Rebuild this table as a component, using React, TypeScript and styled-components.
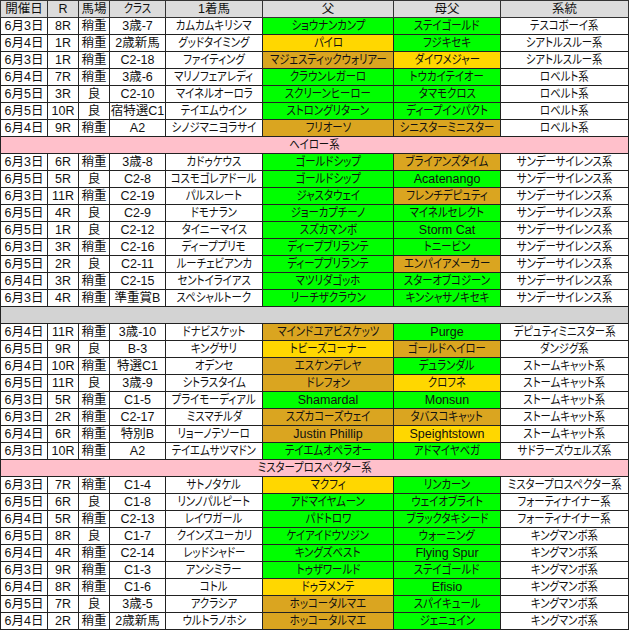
import { Fragment } from "react";
import styled, { createGlobalStyle, css } from "styled-components";

const GlobalStyle = createGlobalStyle`
  body {
    margin: 0;
    background: #fff;
    font-family: "Liberation Sans", "Noto Sans CJK JP", sans-serif;
  }
`;

type Tone = "G" | "Y" | "O" | "W";

const toneColor: Record<Tone, string> = {
  G: "#00ff00",
  Y: "#ffd700",
  O: "#daa520",
  W: "#ffffff",
};

type Entry = [string, string, string, string, string, string, Tone, string, Tone, string];

type Block = { title?: string; grey?: boolean; rows: Entry[] };

const blocks: Block[] = [
  {
    rows: [
      ["6月3日", "8R", "稍重", "3歳-7", "カムカムキリシマ", "ショウナンカンプ", "G", "ステイゴールド", "G", "テスコボーイ系"],
      ["6月4日", "1R", "稍重", "2歳新馬", "グッドタイミング", "パイロ", "Y", "フジキセキ", "G", "シアトルスルー系"],
      ["6月3日", "1R", "稍重", "C2-18", "ファイティング", "マジェスティックウォリアー", "O", "ダイワメジャー", "Y", "シアトルスルー系"],
      ["6月4日", "7R", "稍重", "3歳-6", "マリノフェアレディ", "クラウンレガーロ", "G", "トウカイテイオー", "G", "ロベルト系"],
      ["6月5日", "3R", "良", "C2-10", "マイネルオーロラ", "スクリーンヒーロー", "G", "タマモクロス", "G", "ロベルト系"],
      ["6月5日", "10R", "良", "宿特選C1", "テイエムウイン", "ストロングリターン", "G", "ディープインパクト", "G", "ロベルト系"],
      ["6月4日", "9R", "稍重", "A2", "シノジマニヨラサイ", "フリオーソ", "O", "シニスターミニスター", "O", "ロベルト系"],
    ],
  },
  {
    title: "ヘイロー系",
    rows: [
      ["6月3日", "6R", "稍重", "3歳-8", "カドゥケウス", "ゴールドシップ", "G", "ブライアンズタイム", "O", "サンデーサイレンス系"],
      ["6月5日", "5R", "良", "C2-8", "コスモゴレアドール", "ゴールドシップ", "G", "Acatenango", "G", "サンデーサイレンス系"],
      ["6月3日", "11R", "稍重", "C2-19", "パルスレート", "ジャスタウェイ", "G", "フレンチデピュティ", "O", "サンデーサイレンス系"],
      ["6月5日", "4R", "良", "C2-9", "ドモナラン", "ジョーカプチーノ", "G", "マイネルセレクト", "G", "サンデーサイレンス系"],
      ["6月5日", "1R", "良", "C2-12", "タイニーマイス", "スズカマンボ", "G", "Storm Cat", "G", "サンデーサイレンス系"],
      ["6月3日", "3R", "稍重", "C2-16", "ディーププリモ", "ディープブリランテ", "G", "トニービン", "G", "サンデーサイレンス系"],
      ["6月5日", "2R", "良", "C2-11", "ルーチェビアンカ", "ディープブリランテ", "G", "エンパイアメーカー", "O", "サンデーサイレンス系"],
      ["6月4日", "3R", "稍重", "C2-15", "セントイライアス", "マツリダゴッホ", "G", "スターオブコジーン", "G", "サンデーサイレンス系"],
      ["6月3日", "4R", "稍重", "準重賞B", "スペシャルトーク", "リーチザクラウン", "G", "キンシャサノキセキ", "G", "サンデーサイレンス系"],
    ],
  },
  {
    grey: true,
    rows: [
      ["6月4日", "11R", "稍重", "3歳-10", "ドナビスケット", "マインドユアビスケッツ", "O", "Purge", "G", "デピュティミニスター系"],
      ["6月5日", "9R", "良", "B-3", "キングサリ", "トビーズコーナー", "Y", "ゴールドヘイロー", "O", "ダンジグ系"],
      ["6月4日", "10R", "稍重", "特選C1", "オデンセ", "エスケンデレヤ", "O", "デュランダル", "G", "ストームキャット系"],
      ["6月5日", "11R", "良", "3歳-9", "シトラスタイム", "ドレフォン", "O", "クロフネ", "Y", "ストームキャット系"],
      ["6月3日", "5R", "稍重", "C1-5", "プライモーディアル", "Shamardal", "G", "Monsun", "G", "ストームキャット系"],
      ["6月3日", "2R", "稍重", "C2-17", "ミスマチルダ", "スズカコーズウェイ", "O", "タバスコキャット", "O", "ストームキャット系"],
      ["6月4日", "6R", "稍重", "特別B", "リョーノテソーロ", "Justin Phillip", "O", "Speightstown", "Y", "ストームキャット系"],
      ["6月3日", "10R", "稍重", "A2", "テイエムサツマドン", "テイエムオペラオー", "G", "アドマイヤベガ", "G", "サドラーズウェルズ系"],
    ],
  },
  {
    title: "ミスタープロスペクター系",
    rows: [
      ["6月3日", "7R", "稍重", "C1-4", "サトノタケル", "マクフィ", "Y", "リンカーン", "G", "ミスタープロスペクター系"],
      ["6月5日", "6R", "良", "C1-8", "リンノパルピート", "アドマイヤムーン", "G", "ウェイオブライト", "G", "フォーティナイナー系"],
      ["6月4日", "5R", "稍重", "C2-13", "レイワガール", "パドトロワ", "G", "ブラックタキシード", "G", "フォーティナイナー系"],
      ["6月5日", "8R", "良", "C1-7", "クインズユーカリ", "ケイアイドウソジン", "G", "ウォーニング", "G", "キングマンボ系"],
      ["6月4日", "4R", "稍重", "C2-14", "レッドシャドー", "キングズベスト", "G", "Flying Spur", "G", "キングマンボ系"],
      ["6月3日", "9R", "稍重", "C1-3", "アンシミラー", "トゥザワールド", "G", "ステイゴールド", "G", "キングマンボ系"],
      ["6月4日", "8R", "稍重", "C1-6", "コトル", "ドゥラメンテ", "Y", "Efisio", "G", "キングマンボ系"],
      ["6月5日", "7R", "良", "3歳-5", "アクラシア", "ホッコータルマエ", "O", "スパイキュール", "G", "キングマンボ系"],
      ["6月4日", "2R", "稍重", "2歳新馬", "ウルトラノホシ", "ホッコータルマエ", "O", "ジェニュイン", "G", "キングマンボ系"],
    ],
  },
];

const columns = [
  { label: "開催日", width: 47 },
  { label: "R", width: 31 },
  { label: "馬場", width: 31 },
  { label: "クラス", width: 56 },
  { label: "1着馬", width: 97 },
  { label: "父", width: 131 },
  { label: "母父", width: 107 },
  { label: "系統", width: 128 },
];

const hasKana = (s: string) => /[\u3040-\u30ff]/.test(s);

const Table = styled.table`
  border-collapse: collapse;
  table-layout: fixed;
  width: 629px;
  font-size: 12.5px;
  color: #111;
  font-feature-settings: "palt";
`;

const Row = styled.tr`
  height: 17px;
`;

const HeadCell = styled.th`
  background: #dcdcdc;
  font-weight: normal;
  border: 1px solid #333;
  padding: 0;
  line-height: 15px;
  text-align: center;
  white-space: nowrap;
  overflow: hidden;
`;

const Cell = styled.td<{ $tone?: Tone }>`
  background: ${(p) => toneColor[p.$tone ?? "W"]};
  border: 1px solid #222;
  padding: 0;
  line-height: 15px;
  text-align: center;
  white-space: nowrap;
  overflow: hidden;
`;

const BandCell = styled.td<{ $grey?: boolean }>`
  background: ${(p) => (p.$grey ? "#d3d3d3" : "#ffc0cb")};
  border: 1px solid #222;
  padding: 0;
  line-height: 15px;
  text-align: center;
`;

// kana runs are set condensed, like the narrow UI face in the sheet
const Fit = styled.span<{ $squeeze: boolean }>`
  display: inline-block;
  ${(p) =>
    p.$squeeze &&
    css`
      transform: scaleX(0.83);
      margin: 0 -30px;
    `}
`;

const Text = ({ children }: { children: string }) => (
  <Fit $squeeze={hasKana(children)}>{children}</Fit>
);

export default function App() {
  return (
    <>
      <GlobalStyle />
      <Table>
        <colgroup>
          {columns.map((c) => (
            <col key={c.label} style={{ width: c.width }} />
          ))}
        </colgroup>
        <thead>
          <Row>
            {columns.map((c) => (
              <HeadCell key={c.label}>
                <Text>{c.label}</Text>
              </HeadCell>
            ))}
          </Row>
        </thead>
        <tbody>
          {blocks.map((b, bi) => (
            <Fragment key={bi}>
              {bi > 0 && (
                <Row>
                  <BandCell colSpan={8} $grey={b.grey}>
                    {b.title ? <Text>{b.title}</Text> : null}
                  </BandCell>
                </Row>
              )}
              {b.rows.map((r, ri) => (
                <Row key={ri}>
                  <Cell><Text>{r[0]}</Text></Cell>
                  <Cell><Text>{r[1]}</Text></Cell>
                  <Cell><Text>{r[2]}</Text></Cell>
                  <Cell><Text>{r[3]}</Text></Cell>
                  <Cell><Text>{r[4]}</Text></Cell>
                  <Cell $tone={r[6]}><Text>{r[5]}</Text></Cell>
                  <Cell $tone={r[8]}><Text>{r[7]}</Text></Cell>
                  <Cell><Text>{r[9]}</Text></Cell>
                </Row>
              ))}
            </Fragment>
          ))}
        </tbody>
      </Table>
    </>
  );
}
